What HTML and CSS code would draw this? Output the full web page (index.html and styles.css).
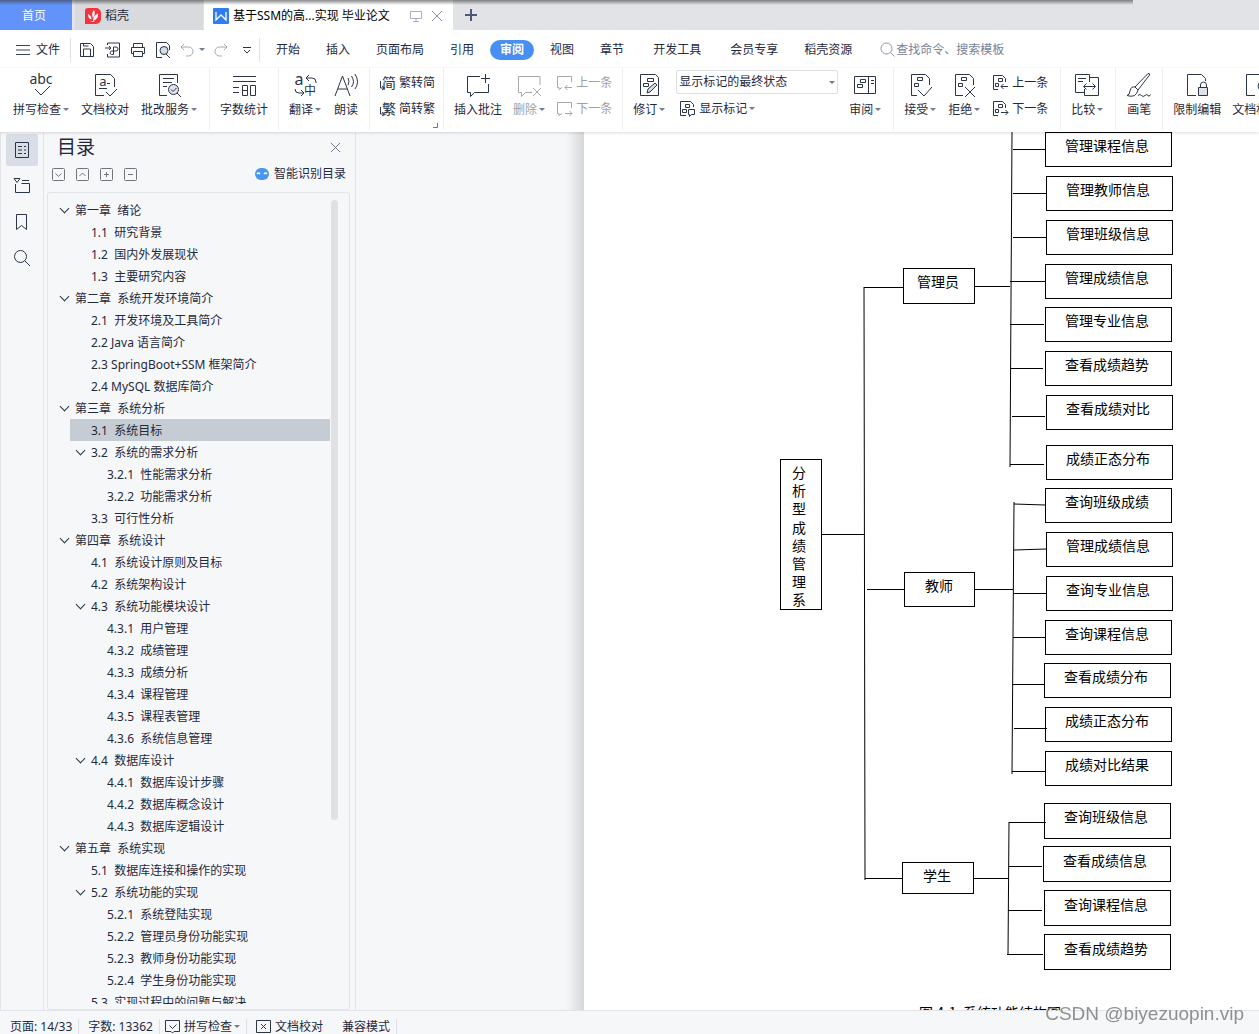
FILE: index.html
```html
<!DOCTYPE html>
<html lang="zh-CN">
<head>
<meta charset="utf-8">
<title>基于SSM的高…实现 毕业论文</title>
<link rel="stylesheet" href="styles.css">
</head>
<body>
<header class="tabs">
  <button class="tab tab-home">首页</button>
  <button class="tab tab-docer">
    <svg width="16" height="16" viewBox="0 0 16 16"><path d="M3 0h8a5 5 0 0 1 5 5v6a5 5 0 0 1-5 5H0V3a3 3 0 0 1 3-3z" fill="#f5333c"/><path d="M9 2c1.500 2.500 1 5-1 8C6.500 7 7 4 9 2zM3 6c2.500 1 3.500 3 3.500 5.500C4 11 3 9 3 6zM13 5.500c.5 4-1.500 6-5 7.500 0-4 2-6 5-7.500zM5 13h5l-2 1z" fill="#fff"/></svg>
    <span>稻壳</span>
  </button>
  <button class="tab tab-doc">
    <svg width="16" height="16" viewBox="0 0 16 16"><rect width="16" height="16" rx="1" fill="#2f7df0"/><path d="M3 4v8l5-5 5 5V4" fill="none" stroke="#fff" stroke-width="1.300"/></svg>
    <span>基于SSM的高...实现 毕业论文</span>
    <svg class="tab-screen" width="12" height="12" viewBox="0 0 12 12" fill="none" stroke="#a9b1c0"><path d="M.5 1.500h11v7H.5zM6 8.500v3M3 11.500h6"/></svg>
    <svg width="12" height="12" viewBox="0 0 12 12" fill="none" stroke="#8a93a6"><path d="M1 1l10 10M11 1L1 11"/></svg>
  </button>
  <button class="tab-new" aria-label="新建"><svg width="12" height="12" viewBox="0 0 12 12"><path d="M6 0v12M0 6h12" stroke="#4d5a75" stroke-width="2"/></svg></button>
</header>

<nav class="menu">
  <button class="file"><svg width="14" height="10" viewBox="0 0 14 10" stroke="#3c4657"><path d="M0 .5h14M0 5h14M0 9.500h14"/></svg>文件</button>
  <div class="quick">
    <button aria-label="保存"><svg class="ico" width="16" height="16" viewBox="0 0 16 16"><path d="M1.500 1.500h10l3 3v10h-13zM4.500 14v-7h7v7M4.500 1.500v2.500h5"/></svg></button>
    <button aria-label="输出为PDF"><svg class="ico" width="17" height="16" viewBox="0 0 17 16"><path d="M3.500 3V1h12v14h-12v-3M1 6h6M5 4l2 2-2 2M9.500 12V5h2.500a1.800 1.800 0 0 1 0 4H7.500a1.800 1.800 0 0 0 0 3.500h2z"/></svg></button>
    <button aria-label="打印"><svg class="ico" width="16" height="16" viewBox="0 0 16 16"><path d="M3.500 5V1.500h9V5M3.500 11.500h-2V5.500h13v6h-2M3.500 9.500h9v5h-9z"/></svg></button>
    <button aria-label="打印预览"><svg class="ico" width="16" height="16" viewBox="0 0 16 16"><path d="M7 15.500H1.500v-15h10l3 3V8M11 12l4 4"/><circle cx="9" cy="8.500" r="4" fill="#d7dbe2"/></svg></button>
    <button class="undo" aria-label="撤销"><svg class="ico off" width="14" height="14" viewBox="0 0 14 14"><path d="M4 1L1 4l3 3M1 4h7.500a4.500 4.500 0 0 1 0 9H6"/></svg><i class="caret"></i></button>
    <button aria-label="恢复"><svg class="ico off" width="14" height="14" viewBox="0 0 14 14"><path d="M10 1l3 3-3 3M13 4H5.500a4.500 4.500 0 0 0 0 9H8"/></svg></button>
    <button aria-label="更多"><svg class="ico" width="8" height="8" viewBox="0 0 8 8"><path d="M0 1.500h8M1 4l3 3 3-3"/></svg></button>
  </div>
  <div class="menu-tabs">
    <button>开始</button><button>插入</button><button>页面布局</button><button>引用</button><button class="on"><span>审阅</span></button><button>视图</button><button>章节</button><button class="dev">开发工具</button><button>会员专享</button><button>稻壳资源</button>
  </div>
  <label class="search"><svg width="15" height="15" viewBox="0 0 15 15" fill="none" stroke="#8c95a6"><circle cx="6.500" cy="6.500" r="5.500"/><path d="M10.500 10.500l4 4"/></svg><input type="text" aria-label="查找命令" placeholder="查找命令、搜索模板"></label>
</nav>

<section class="ribbon">
  <div class="group loose">
    <button class="big"><svg class="ico" width="26" height="26" viewBox="0 0 26 26"><text x="13" y="12" class="ico-text abc">abc</text><path d="M7 17l6 6 9-9"/></svg><span>拼写检查<i class="caret"></i></span></button>
    <button class="big"><svg class="ico" width="26" height="26" viewBox="0 0 26 26"><path d="M12 23.500H3.500v-21h15l4 4V15M7 16.500h8M15 11.500h3M14 20l4 4 7-7"/><text x="11" y="14" class="ico-text small">a</text></svg><span>文档校对</span></button>
    <button class="big"><svg class="ico" width="26" height="26" viewBox="0 0 26 26"><path d="M11 23.500H3.500v-21h18V11M7 6.500h11M7 10.500h9M7 14.500h4M21 21l4 4"/><circle cx="17.500" cy="17.500" r="5" fill="#dfe2e8"/><path d="M15 17.500l2 2 3.500-3.500"/></svg><span>批改服务<i class="caret"></i></span></button>
  </div>
  <div class="group even">
    <button class="big"><svg class="ico" width="26" height="26" viewBox="0 0 26 26"><path d="M2 4.500h23M2 9.500h23M2 15.500h6M2 20.500h6M11.500 13.500h5v10h-5zM11.500 18.500h5M19.500 13.500h5v10h-5z"/></svg><span>字数统计</span></button>
  </div>
  <div class="group even loose">
    <button class="big"><svg class="ico" width="26" height="26" viewBox="0 0 26 26"><text x="7" y="13" class="ico-text mid">a</text><text x="18" y="23" class="ico-text cjk">中</text><path d="M17 3l-3 3 3 3M14 6h6a4 4 0 0 1 4 4v1M9 18l3 3-3 3M12 21H7a4 4 0 0 1-4-4"/></svg><span>翻译<i class="caret"></i></span></button>
    <button class="big"><svg class="ico" width="26" height="26" viewBox="0 0 26 26"><path d="M2 24L9.500 4 17 24M5 17h9M15 6q2 3 0 7M18.500 4q4 6 0 11M22 2q5 8 0 15"/></svg><span>朗读</span></button>
  </div>
  <div class="group convert">
    <div class="rows">
      <button class="row"><svg class="ico" width="17" height="18" viewBox="0 0 17 18"><text x="10" y="14" class="ico-text hanzi">简</text><path d="M1.500 7v7h4M3 12l2.500 2L3 16"/></svg>繁转简</button>
      <button class="row"><svg class="ico" width="17" height="18" viewBox="0 0 17 18"><text x="10" y="14" class="ico-text hanzi">繁</text><path d="M1.500 7v7h4M3 12l2.500 2L3 16"/></svg>简转繁</button>
    </div>
    <svg class="corner" width="5" height="5" viewBox="0 0 5 5"><path d="M4.500 0v4.500H0" fill="none" stroke="#6d7686"/></svg>
  </div>
  <div class="group even">
    <button class="big"><svg class="ico" width="26" height="26" viewBox="0 0 26 26"><path d="M15 4.500H2.500v16h3v4l4-4h14V12M20.500 2v9M16 6.500h9"/></svg><span>插入批注</span></button>
    <button class="big off" disabled><svg class="ico" width="26" height="26" viewBox="0 0 26 26"><path d="M24 13V4.500H2.500v16h3v4l4-4H16M17 16l8 8M25 16l-8 8"/></svg><span>删除<i class="caret"></i></span></button>
    <div class="rows">
      <button class="row off" disabled><svg class="ico" width="17" height="16" viewBox="0 0 17 16"><path d="M6 12.500l-3 2v-2H1.500v-11h14V7M16 12.500H9M11.500 10L9 12.500l2.500 2.500"/></svg>上一条</button>
      <button class="row off" disabled><svg class="ico" width="17" height="16" viewBox="0 0 17 16"><path d="M6 12.500l-3 2v-2H1.500v-11h14V7M9 12.500h7M13.500 10l2.500 2.500-2.500 2.500"/></svg>下一条</button>
    </div>
  </div>
  <div class="group">
    <button class="big"><svg class="ico" width="26" height="26" viewBox="0 0 26 26"><path d="M4.500 2.500h15l3 3v18h-18zM11.500 6.500h6v3h-6zM7.500 11.500h5v3h-5z"/><path d="M11 21l1-4 7-6 2 2-7 7z" fill="#d7dbe2"/></svg><span>修订<i class="caret"></i></span></button>
    <div class="rows">
      <span class="combo"><select aria-label="显示状态"><option>显示标记的最终状态</option></select><i class="caret"></i></span>
      <button class="row show"><svg class="ico" width="17" height="17" viewBox="0 0 17 17"><path d="M7 15.500H1.500v-14h10l3 3V7M6.500 4.500h4v3h-4zM3.500 9.500h4v3h-4zM9.500 9.500h6v5h-3l-2 2v-2h-1z"/></svg><span>显示标记<i class="caret"></i></span></button>
    </div>
    <button class="big"><svg class="ico" width="26" height="26" viewBox="0 0 26 26"><path d="M2.500 4.500h21v17h-21zM16.500 4.500v17M8.500 7.500h5v3h-5zM5.500 12.500h5v3h-5zM19 8.500h3M19 11.500h3"/></svg><span>审阅<i class="caret"></i></span></button>
  </div>
  <div class="group loose">
    <button class="big"><svg class="ico" width="26" height="26" viewBox="0 0 26 26"><path d="M10 23.500H4.500v-21h14l4 4V13M10.500 5.500h5v3h-5zM7.500 11.500h4v3h-4zM11 18l6 6 8-9"/></svg><span>接受<i class="caret"></i></span></button>
    <button class="big"><svg class="ico" width="26" height="26" viewBox="0 0 26 26"><path d="M12 23.500H4.500v-21h14l4 4V13M10.500 5.500h5v3h-5zM7.500 11.500h4v3h-4zM14 15l10 10M24 15L14 25"/></svg><span>拒绝<i class="caret"></i></span></button>
    <div class="rows">
      <button class="row"><svg class="ico" width="17" height="17" viewBox="0 0 17 17"><path d="M6 15.500H1.500v-14h9l3 3V8M6.500 4.500h4v3h-4zM3.500 9.500h3v3h-3zM16 12.500H9M11.500 10L9 12.500l2.500 2.500"/></svg>上一条</button>
      <button class="row"><svg class="ico" width="17" height="17" viewBox="0 0 17 17"><path d="M6 15.500H1.500v-14h9l3 3V8M6.500 4.500h4v3h-4zM3.500 9.500h3v3h-3zM9 12.500h7M13.500 10l2.500 2.500-2.500 2.500"/></svg>下一条</button>
    </div>
  </div>
  <div class="group">
    <button class="big"><svg class="ico" width="26" height="26" viewBox="0 0 26 26"><path d="M15.500 10V2.500h-14v18h9M4 6.500h8M4 9.500h5M15.500 5.500h9v18h-14V17M10 14.500h11M12.500 11.500l-3 3 3 3M18.500 11.500l3 3-3 3"/></svg><span>比较<i class="caret"></i></span></button>
  </div>
  <div class="group even">
    <button class="big"><svg class="ico" width="26" height="26" viewBox="0 0 26 26"><path d="M9 15L22 1.500q2-.5 1.500 1.500L12 18M9 15l3 3M9 15q-4-1-5 4-.5 4-3 4.500 9 3 11-5.500M12 23.500q2-2 3.500 0t3.500 0 3 0 2.500-1"/></svg><span>画笔</span></button>
  </div>
  <div class="group last">
    <button class="big"><svg class="ico" width="26" height="26" viewBox="0 0 26 26"><path d="M12 23.500H3.500v-21h14l4 4V9M16.500 16v-3a3 3 0 0 1 6 0v3"/><path d="M14.500 15.500h9v8h-9z" fill="#dfe2e8"/></svg><span>限制编辑</span></button>
    <button class="big"><svg class="ico" width="26" height="26" viewBox="0 0 26 26"><path d="M12 23.500H3.500v-21h14l4 4V9"/><circle cx="19" cy="14" r="4"/></svg><span>文档权限</span></button>
  </div>
</section>

<main class="work">
  <nav class="rail">
    <button class="on" aria-label="目录"><svg class="ico" width="18" height="18" viewBox="0 0 18 18"><path d="M2.500 1.500h13v15h-13zM5 5.500h4M11 5.500h2M5 9h4M11 9h2M5 12.500h4M11 12.500h2"/></svg></button>
    <button aria-label="章节"><svg class="ico" width="18" height="18" viewBox="0 0 18 18"><path d="M1 1.500h6L4 5.500zM9 3.500h7M2.500 7v8.500h14v-9h-8"/></svg></button>
    <button aria-label="书签"><svg class="ico" width="18" height="18" viewBox="0 0 18 18"><path d="M3.500 1.500h10v15l-5-4-5 4z"/></svg></button>
    <button aria-label="查找"><svg class="ico" width="18" height="18" viewBox="0 0 18 18"><circle cx="7.500" cy="7.500" r="6"/><path d="M12 12l5 5"/></svg></button>
  </nav>
  <aside class="outline">
    <div class="outline-head">
      <h2>目录</h2>
      <button aria-label="关闭"><svg width="11" height="11" viewBox="0 0 11 11" stroke="#6f7784"><path d="M1 1l9 9M10 1l-9 9"/></svg></button>
    </div>
    <div class="outline-tools">
      <button aria-label="展开"><svg width="13" height="13" viewBox="0 0 13 13"><rect x=".5" y=".5" width="12" height="12" rx="1"/><path d="M3.500 5.500l3 3 3-3"/></svg></button>
      <button aria-label="收起"><svg width="13" height="13" viewBox="0 0 13 13"><rect x=".5" y=".5" width="12" height="12" rx="1"/><path d="M3.500 8l3-3 3 3"/></svg></button>
      <button aria-label="增加"><svg width="13" height="13" viewBox="0 0 13 13"><rect x=".5" y=".5" width="12" height="12" rx="1"/><path d="M6.500 4v5M4 6.500h5"/></svg></button>
      <button aria-label="减少"><svg width="13" height="13" viewBox="0 0 13 13"><rect x=".5" y=".5" width="12" height="12" rx="1"/><path d="M4 6.500h5"/></svg></button>
      <a class="smart" href="#"><svg width="14" height="12" viewBox="0 0 14 12"><rect width="14" height="12" rx="6" fill="#4a94f2"/><path d="M2 6q1.500-2 3 0M9 6q1.500-2 3 0" fill="none" stroke="#fff" stroke-width="1.500"/></svg>智能识别目录</a>
    </div>
    <div class="toc-box">
      <ul class="toc">
        <li class="l1 open"><a href="#">第一章  绪论</a></li>
        <li class="l2"><a href="#">1.1  研究背景</a></li>
        <li class="l2"><a href="#">1.2  国内外发展现状</a></li>
        <li class="l2"><a href="#">1.3  主要研究内容</a></li>
        <li class="l1 open"><a href="#">第二章  系统开发环境简介</a></li>
        <li class="l2"><a href="#">2.1  开发环境及工具简介</a></li>
        <li class="l2"><a href="#">2.2 Java 语言简介</a></li>
        <li class="l2"><a href="#">2.3 SpringBoot+SSM 框架简介</a></li>
        <li class="l2"><a href="#">2.4 MySQL 数据库简介</a></li>
        <li class="l1 open"><a href="#">第三章  系统分析</a></li>
        <li class="l2 current"><a href="#">3.1  系统目标</a></li>
        <li class="l2 open"><a href="#">3.2  系统的需求分析</a></li>
        <li class="l3"><a href="#">3.2.1  性能需求分析</a></li>
        <li class="l3"><a href="#">3.2.2  功能需求分析</a></li>
        <li class="l2"><a href="#">3.3  可行性分析</a></li>
        <li class="l1 open"><a href="#">第四章  系统设计</a></li>
        <li class="l2"><a href="#">4.1  系统设计原则及目标</a></li>
        <li class="l2"><a href="#">4.2  系统架构设计</a></li>
        <li class="l2 open"><a href="#">4.3  系统功能模块设计</a></li>
        <li class="l3"><a href="#">4.3.1  用户管理</a></li>
        <li class="l3"><a href="#">4.3.2  成绩管理</a></li>
        <li class="l3"><a href="#">4.3.3  成绩分析</a></li>
        <li class="l3"><a href="#">4.3.4  课程管理</a></li>
        <li class="l3"><a href="#">4.3.5  课程表管理</a></li>
        <li class="l3"><a href="#">4.3.6  系统信息管理</a></li>
        <li class="l2 open"><a href="#">4.4  数据库设计</a></li>
        <li class="l3"><a href="#">4.4.1  数据库设计步骤</a></li>
        <li class="l3"><a href="#">4.4.2  数据库概念设计</a></li>
        <li class="l3"><a href="#">4.4.3  数据库逻辑设计</a></li>
        <li class="l1 open"><a href="#">第五章  系统实现</a></li>
        <li class="l2"><a href="#">5.1  数据库连接和操作的实现</a></li>
        <li class="l2 open"><a href="#">5.2  系统功能的实现</a></li>
        <li class="l3"><a href="#">5.2.1  系统登陆实现</a></li>
        <li class="l3"><a href="#">5.2.2  管理员身份功能实现</a></li>
        <li class="l3"><a href="#">5.2.3  教师身份功能实现</a></li>
        <li class="l3"><a href="#">5.2.4  学生身份功能实现</a></li>
        <li class="l2"><a href="#">5.3  实现过程中的问题与解决</a></li>
      </ul>
      <div class="toc-thumb"></div>
    </div>
  </aside>
  <section class="canvas">
    <article class="paper">
      <svg class="diagram" width="675" height="900" viewBox="584 132 675 900">
        <g class="links">
          <path d="M822 534H864M864 287H903M867 589H904M865 878H902"/>
          <path d="M975 286H1010M1013 149H1045M1013 193H1046M1013 237H1046M1010 281H1045M1010 324H1044M1010 368H1043M1012 416H1045M1010 464H1044"/>
          <path d="M975 589H1013M1013 593H1046M1013 637H1045M1012 684H1044M1014 728H1047M1012 771H1045"/>
          <path d="M974 878H1008M1009 822H1046M1009 866H1042M1008 910H1042M1007 954H1043"/>
        </g>
        <path class="slanted" d="M864 287L865 880M1012 132L1010 467M1014 502L1012 774M1014 504L1045 505M1014 550L1046 549M1009 822L1008 955"/>
        <g class="nodes">
          <rect x="780" y="459" width="41" height="150"/>
          <rect x="903" y="268" width="71" height="35"/><text x="938" y="287">管理员</text>
          <rect x="904" y="572" width="70" height="34"/><text x="939" y="591">教师</text>
          <rect x="902" y="862" width="71" height="31"/><text x="937" y="881">学生</text>
          <rect x="1045" y="132" width="126" height="34"/><text x="1107" y="151">管理课程信息</text>
          <rect x="1046" y="176" width="126" height="34"/><text x="1108" y="195">管理教师信息</text>
          <rect x="1046" y="220" width="126" height="34"/><text x="1108" y="239">管理班级信息</text>
          <rect x="1045" y="264" width="126" height="34"/><text x="1107" y="283">管理成绩信息</text>
          <rect x="1045" y="307" width="126" height="34"/><text x="1107" y="326">管理专业信息</text>
          <rect x="1045" y="351" width="126" height="34"/><text x="1107" y="370">查看成绩趋势</text>
          <rect x="1046" y="395" width="126" height="34"/><text x="1108" y="414">查看成绩对比</text>
          <rect x="1046" y="445" width="126" height="34"/><text x="1108" y="464">成绩正态分布</text>
          <rect x="1045" y="488" width="126" height="34"/><text x="1107" y="507">查询班级成绩</text>
          <rect x="1046" y="532" width="126" height="34"/><text x="1108" y="551">管理成绩信息</text>
          <rect x="1046" y="576" width="126" height="34"/><text x="1108" y="595">查询专业信息</text>
          <rect x="1045" y="620" width="126" height="34"/><text x="1107" y="639">查询课程信息</text>
          <rect x="1044" y="663" width="126" height="34"/><text x="1106" y="682">查看成绩分布</text>
          <rect x="1045" y="707" width="126" height="34"/><text x="1107" y="726">成绩正态分布</text>
          <rect x="1045" y="751" width="126" height="34"/><text x="1107" y="770">成绩对比结果</text>
          <rect x="1044" y="803" width="126" height="35"/><text x="1106" y="822">查询班级信息</text>
          <rect x="1043" y="846" width="127" height="35"/><text x="1105" y="866">查看成绩信息</text>
          <rect x="1044" y="890" width="126" height="35"/><text x="1106" y="910">查询课程信息</text>
          <rect x="1044" y="934" width="126" height="35"/><text x="1106" y="954">查看成绩趋势</text>
          <text x="799" y="478"><tspan x="799">分</tspan><tspan x="799" dy="18">析</tspan><tspan x="799" dy="18">型</tspan><tspan x="799" dy="19">成</tspan><tspan x="799" dy="18">绩</tspan><tspan x="799" dy="18">管</tspan><tspan x="799" dy="18">理</tspan><tspan x="799" dy="18">系</tspan></text>
          <text class="caption" x="990" y="1018">图 4-1  系统功能结构图</text>
        </g>
      </svg>
    </article>
  </section>
</main>

<footer class="status">
  <span class="cell">页面: 14/33</span>
  <span class="cell">字数: 13362</span>
  <button class="cell tight"><svg class="ico" width="15" height="15" viewBox="0 0 15 15"><path d="M6 12.500H.5v-11h14v11H9L7.500 14zM4.500 6.500l3 3 4-4"/></svg><span>拼写检查<i class="caret"></i></span></button>
  <button class="cell proof"><svg class="ico" width="15" height="15" viewBox="0 0 15 15"><path d="M4 1.500H.5v12H4M11 1.500h3.500v12H11M4 1.500h7M4 13.500h7M5 5l5 5M10 5l-5 5"/></svg>文档校对</button>
  <span class="cell">兼容模式</span>
</footer>
<div class="watermark">CSDN @biyezuopin.vip</div>
</body>
</html>
```
FILE: styles.css
```css
*, ::before, ::after { box-sizing: border-box; }

body {
  margin: 0;
  height: 100vh;
  display: flex;
  flex-direction: column;
  overflow: hidden;
  background: #fff;
  color: #1f2a3d;
  font: 12px/16px "Noto Sans", "Noto Sans CJK SC", sans-serif;
}

button {
  margin: 0;
  padding: 0;
  border: 0;
  background: none;
  color: inherit;
  font: inherit;
  white-space: nowrap;
}

svg { display: block; flex: none; }
a { color: inherit; text-decoration: none; }

.ico { fill: none; stroke: #2b3548; stroke-width: 1; overflow: visible; }
.ico.off, .off .ico { stroke: #a8a8a8; }
.off { color: #a0a0a0; }

.ico-text { fill: #2b3548; stroke: none; text-anchor: middle; }
.abc { font-size: 14px; }
.mid { font-size: 16px; }
.small { font-size: 13px; }
.cjk { font-size: 12px; }
.hanzi { font-size: 14px; }

.caret {
  display: inline-block;
  width: 6px;
  margin-left: 2px;
  border: solid transparent;
  border-width: 3px 3px 0 3px;
  border-top-color: #6f7b91;
  vertical-align: 3px;
}

/* window tabs */
.tabs {
  position: relative;
  flex: none;
  height: 30px;
  display: flex;
  background: #e1e3e7;
}
.tabs::after {
  content: "";
  position: absolute;
  top: 0;
  left: 0;
  width: 90%;
  height: 5px;
  background: linear-gradient(rgba(60, 60, 60, .6), rgba(120, 120, 120, 0));
}
.tab { display: flex; align-items: center; padding-top: 2px; }
.tab-home { width: 72px; justify-content: center; padding-right: 4px; background: #6293fb; color: #fff; }
.tab-docer { width: 128px; margin: 0 1px 0 3px; padding-left: 10px; gap: 4px; background: #d8dade; }
.tab-doc { width: 249px; padding-left: 9px; gap: 4px; background: #fff; color: #000; }
.tab-screen { margin: 0 5px 0 16px; }
.tab-new { padding: 0 12px; }

/* menu row */
.menu { flex: none; height: 38px; display: flex; align-items: center; padding-top: 1px; }
.file { display: flex; align-items: center; gap: 6px; padding: 0 10px 0 16px; }
.quick {
  display: flex;
  align-items: center;
  gap: 9px;
  height: 24px;
  padding: 0 8px;
  border: solid #dfe1e6;
  border-width: 0 1px;
}
.quick svg { display: inline-block; vertical-align: middle; }
.quick .caret { margin-left: 5px; }
.quick button:last-child { margin-left: 6px; }
.menu-tabs { display: flex; align-items: center; padding-left: 3px; }
.menu-tabs button { padding: 0 13px; }
.menu-tabs .dev { padding: 0 16px; }
.menu-tabs .on { padding: 0 3px; color: #fff; font-weight: bold; }
.menu-tabs .on span { display: block; padding: 2px 10px; border-radius: 10px; background: #478ff2; }
.search { display: flex; align-items: center; gap: 1px; padding-left: 15px; }
.search input { border: 0; padding: 0; width: 120px; font: inherit; background: none; }
.search input::placeholder { color: #76829a; opacity: 1; }

/* ribbon */
.ribbon {
  position: relative;
  z-index: 1;
  flex: none;
  height: 64px;
  display: flex;
  padding-bottom: 2px;
  box-shadow: 0 1px 3px rgba(0, 0, 0, .14);
  background: #fff;
}
.group {
  position: relative;
  flex: none;
  display: flex;
  align-items: flex-start;
  gap: 11px;
  padding: 0 12px 0 10px;
  border-right: 1px solid #eceef1;
}
.group:first-child { padding-left: 13px; }
.group.even { padding-right: 10px; }
.group.loose { gap: 12px; }
.group.convert { padding: 0 8px 0 9px; }
.group.last { border-right: 0; }
.big { display: flex; flex-direction: column; align-items: center; gap: 4px; padding-top: 4px; }
.rows { display: flex; flex-direction: column; align-items: flex-start; gap: 2px; padding-top: 2px; }
.row { display: flex; align-items: center; gap: 3px; height: 24px; padding-top: 1px; }
.row.show { padding-left: 3px; }
.corner { position: absolute; right: 5px; bottom: 2px; }
.combo { position: relative; display: block; }
.combo select {
  display: block;
  width: 162px;
  height: 24px;
  padding: 0 2px;
  border: 1px solid #dcdfe4;
  border-radius: 2px;
  background: #fff;
  color: inherit;
  font: inherit;
  appearance: none;
}
.combo .caret { position: absolute; right: 3px; top: 11px; }

/* work area */
.work { flex: 1; min-height: 0; display: flex; background: #f6f7f9; border-bottom: 1px solid #e2e4ea; }
.rail {
  flex: none;
  width: 44px;
  display: flex;
  flex-direction: column;
  align-items: center;
  gap: 4px;
  padding-top: 2px;
  border: solid #e2e4ea;
  border-width: 0 1px;
}
.rail button { display: grid; place-items: center; width: 32px; height: 32px; border-radius: 2px; }
.rail .on { background: #d9dde5; }

.outline {
  flex: none;
  width: 312px;
  display: flex;
  flex-direction: column;
  padding: 0 5px 0 3px;
  border-right: 1px solid #e2e4ea;
}
.outline-head { display: flex; align-items: center; justify-content: space-between; height: 30px; padding: 0 9px 0 10px; }
.outline-head h2 { margin: 0; font-size: 19px; line-height: 28px; font-weight: normal; }
.outline-tools { display: flex; align-items: center; gap: 11px; height: 24px; margin-bottom: 6px; padding: 0 4px 0 5px; }
.outline-tools button svg { fill: none; stroke: #70757d; }
.smart { display: flex; align-items: center; gap: 5px; margin-left: auto; }

.toc-box {
  position: relative;
  flex: 1;
  min-height: 0;
  padding: 6px 0 5px;
  border: 1px solid #e2e4ea;
  border-radius: 3px;
}
.toc { height: 100%; margin: 0; padding: 0; overflow: hidden; list-style: none; }
.toc li { display: flex; align-items: center; height: 22px; margin-right: 19px; padding: 1px 0 0 5px; white-space: pre; }
.toc li::before { content: ""; width: 7px; height: 7px; margin: 0 7px 0 2px; }
.toc .open::before { border: solid #2b3548; border-width: 0 1px 1px 0; transform: translateY(-2px) rotate(45deg); }
.toc .l1 { margin-left: 6px; }
.toc .l2 { margin-left: 22px; }
.toc .l3 { margin-left: 38px; }
.toc .current { background: #c5ccd4; }
.toc-thumb { position: absolute; top: 7px; right: 11px; width: 7px; height: 76%; border-radius: 4px; background: #dfe1e4; }

.canvas { flex: 1; min-width: 0; display: flex; padding-left: 210px; overflow: hidden; }
.canvas::before { content: ""; flex: none; width: 18px; background: linear-gradient(90deg, #f6f7f9, #d6d7d9); }
.paper { flex: 1; min-width: 0; background: #fff; overflow: hidden; }

.links, .nodes rect { fill: none; stroke: #000; stroke-width: 1; shape-rendering: crispEdges; }
.slanted { fill: none; stroke: #000; stroke-width: 1; }
.nodes text {
  fill: #000;
  font-family: "Noto Sans CJK SC", sans-serif;
  font-size: 14px;
  text-anchor: middle;
  white-space: pre;
}

/* status bar */
.status { flex: none; height: 23px; display: flex; align-items: center; padding: 8px 0 0 1px; background: #f6f7f9; }
.cell { display: flex; align-items: center; gap: 4px; height: 15px; padding: 0 6px 0 9px; border-right: 1px solid #dcdfe5; }
.cell.tight { padding-left: 5px; }
.cell.proof { padding-right: 10px; border-right: 0; }

.watermark {
  position: fixed;
  right: 15px;
  bottom: 8px;
  color: rgba(110, 110, 110, .75);
  font: 19px/24px "Liberation Sans", sans-serif;
}
```
